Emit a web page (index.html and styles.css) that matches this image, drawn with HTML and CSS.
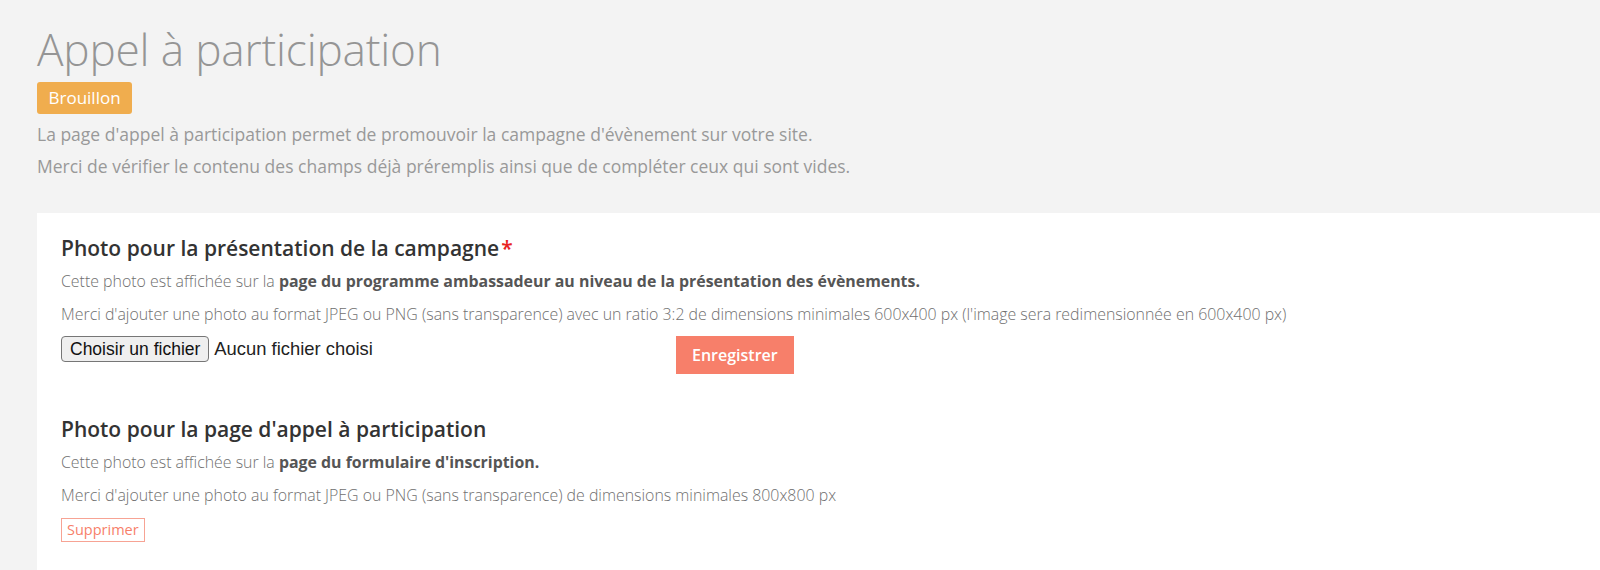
FILE: index.html
```html
<!DOCTYPE html>
<html lang="fr">
<head>
<meta charset="utf-8">
<title>Appel à participation</title>
<link rel="stylesheet" href="styles.css">
</head>
<body>
<main class="page">
  <header class="intro">
    <h1 class="title">Appel à participation</h1>
    <span class="badge">Brouillon</span>
    <p class="lead">La page d'appel à participation permet de promouvoir la campagne d'évènement sur votre site.</p>
    <p class="lead">Merci de vérifier le contenu des champs déjà préremplis ainsi que de compléter ceux qui sont vides.</p>
  </header>

  <section class="card">
    <div class="field">
      <h2 class="field-title">Photo pour la présentation de la campagne<span class="req">*</span></h2>
      <p class="help">Cette photo est affichée sur la <strong>page du programme ambassadeur au niveau de la présentation des évènements.</strong></p>
      <p class="help">Merci d'ajouter une photo au format JPEG ou PNG (sans transparence) avec un ratio 3:2 de dimensions minimales 600x400 px (l'image sera redimensionnée en 600x400 px)</p>
      <div class="upload-row">
        <label class="file-input">
          <span class="file-btn">Choisir un fichier</span>
          <span class="file-name">Aucun fichier choisi</span>
        </label>
        <button type="button" class="btn-save">Enregistrer</button>
      </div>
    </div>

    <div class="field field-second">
      <h2 class="field-title">Photo pour la page d'appel à participation</h2>
      <p class="help">Cette photo est affichée sur la <strong>page du formulaire d'inscription.</strong></p>
      <p class="help">Merci d'ajouter une photo au format JPEG ou PNG (sans transparence) de dimensions minimales 800x800 px</p>
      <button type="button" class="btn-delete">Supprimer</button>
    </div>
  </section>
</main>
</body>
</html>
```

FILE: styles.css
```css
html, body {
  margin: 0;
  padding: 0;
  background: #f3f3f3;
  height: 100%;
}

body {
  font-family: "Open Sans", "Liberation Sans", sans-serif;
  overflow: hidden;
}

.page {
  padding: 0 0 0 37px;
  min-height: 100%;
  box-sizing: border-box;
  display: flex;
  flex-direction: column;
}

.intro {
  padding-top: 24px;
}

.title {
  margin: 0;
  font-size: 44.2px;
  line-height: 50px;
  font-weight: 300;
  color: #959595;
  letter-spacing: -0.2px;
}

.badge {
  display: inline-block;
  margin-top: 8px;
  background: #f0ad4e;
  color: #fff;
  font-size: 17px;
  line-height: 22px;
  padding: 5px 11.5px;
  border-radius: 3px;
}

.lead {
  margin: 8px 0 0;
  font-size: 17.5px;
  line-height: 24px;
  color: #999;
}

.card {
  margin-top: 35px;
  background: #fff;
  flex: 1;
  padding: 21px 24px 24px;
}

.field-title {
  margin: 0 0 8px;
  font-size: 21px;
  line-height: 28px;
  font-weight: 600;
  color: #333;
}

.req {
  color: #e8231f;
  margin-left: 2px;
}

.help {
  margin: 0 0 11px;
  font-size: 15.9px;
  line-height: 22px;
  font-weight: 300;
  color: #6f6f6f;
}

.help strong {
  font-weight: 700;
  color: #555;
}

.upload-row {
  display: grid;
  grid-template-columns: 615px auto;
  align-items: start;
  justify-content: start;
}

.file-input {
  display: flex;
  align-items: center;
  gap: 5px;
  font-family: "Liberation Sans", Arial, sans-serif;
  color: #222;
}

.file-btn {
  display: inline-block;
  background: #efefef;
  border: 1px solid #767676;
  border-radius: 4px;
  padding: 0 8px;
  font-size: 17.5px;
  line-height: 24px;
  color: #111;
}

.file-name {
  font-size: 18.4px;
}

.btn-save {
  font-family: "Open Sans", sans-serif;
  background: #f77f6a;
  color: #fff;
  border: 0;
  font-size: 16px;
  font-weight: 600;
  line-height: 22px;
  padding: 8px 16px;
  cursor: pointer;
}

.field-second {
  margin-top: 41px;
}

.btn-delete {
  margin-top: 1px;
  font-family: "Open Sans", sans-serif;
  background: #fff;
  color: #f77f6a;
  border: 1px solid #f7a394;
  font-size: 14.5px;
  line-height: 22px;
  padding: 0 5px;
  cursor: pointer;
}
```
